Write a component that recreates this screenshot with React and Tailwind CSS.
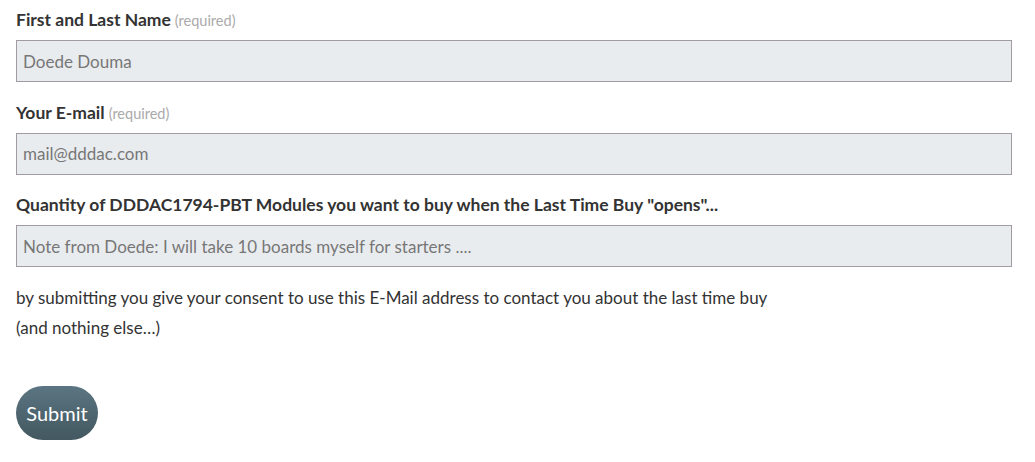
import React, { useState } from 'react';

const font = { fontFamily: 'Lato, "Open Sans", sans-serif' };

const Field = ({ label, required, placeholder, value, onChange }) => (
  <div className="mb-[18.5px]">
    <label className="block h-6 leading-6 mb-2 text-[17.5px] font-bold text-[#333]">
      {label}
      {required && <span className="ml-1 text-[14.5px] font-normal text-[#aaa]">(required)</span>}
    </label>
    <input
      type="text"
      value={value}
      placeholder={placeholder}
      onChange={(e) => onChange(e.target.value)}
      className="w-full h-[42px] px-[6px] bg-[#e9ecef] border border-[#a29ca2] text-[17px] text-[#777] placeholder-[#777] outline-none"
    />
  </div>
);

export default function App() {
  const [name, setName] = useState('Doede Douma');
  const [mail, setMail] = useState('mail@dddac.com');
  const [qty, setQty] = useState('');

  return (
    <div className="w-[1035px] h-[462px] bg-white overflow-hidden" style={font}>
      <form className="pl-4 pr-[23px] pt-2" onSubmit={(e) => e.preventDefault()}>
        <Field label="First and Last Name" required value={name} onChange={setName} />
        <Field label="Your E-mail" required value={mail} onChange={setMail} />
        <Field
          label={'Quantity of DDDAC1794-PBT Modules you want to buy when the Last Time Buy "opens"...'}
          placeholder="Note from Doede: I will take 10 boards myself for starters ...."
          value={qty}
          onChange={setQty}
        />
        <p className="-mt-[3px] text-[17px] leading-[30px] text-[#333]">
          by submitting you give your consent to use this E-Mail address to contact you about the last time buy
          <br />
          (and nothing else…)
        </p>
        <button
          type="submit"
          className="mt-[43px] w-[82px] h-[54px] rounded-full bg-gradient-to-b from-[#5b7582] to-[#435860] text-white text-[20px]"
        >
          Submit
        </button>
      </form>
    </div>
  );
}
